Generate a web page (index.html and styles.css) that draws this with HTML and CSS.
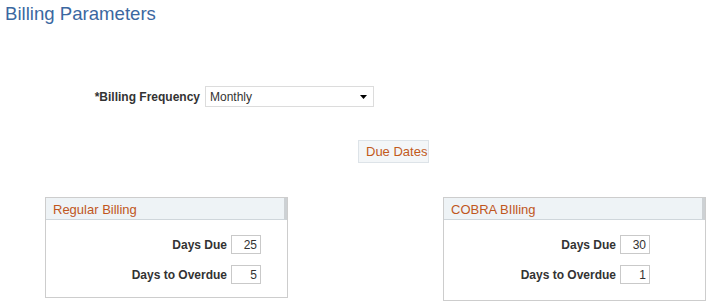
FILE: index.html
```html
<!DOCTYPE html>
<html>
<head>
<meta charset="utf-8">
<link rel="stylesheet" href="styles.css">
</head>
<body>
<h1 class="title">Billing Parameters</h1>
<div class="freq-row">
  <label class="lbl freq-lbl">*Billing Frequency</label>
  <div class="select">
    <span class="select-val">Monthly</span>
    <svg class="caret" width="7" height="4" viewBox="0 0 7 4"><path d="M0 0H7L3.5 4Z" fill="#000"/></svg>
  </div>
</div>
<div class="btn-row">
  <span class="btn">Due Dates</span>
</div>
<div class="boxes">
  <div class="box box-reg">
    <div class="box-head">Regular Billing</div>
    <div class="box-body">
      <div class="field"><span class="lbl">Days Due</span><span class="num">25</span></div>
      <div class="field"><span class="lbl">Days to Overdue</span><span class="num">5</span></div>
    </div>
  </div>
  <div class="box box-cobra">
    <div class="box-head">COBRA BIlling</div>
    <div class="box-body">
      <div class="field"><span class="lbl">Days Due</span><span class="num">30</span></div>
      <div class="field"><span class="lbl">Days to Overdue</span><span class="num">1</span></div>
    </div>
  </div>
</div>
</body>
</html>
```
FILE: styles.css
```css
* { box-sizing: border-box; }
body {
  margin: 0;
  background: #fff;
  font-family: "Liberation Sans", Arial, sans-serif;
  color: #333;
}
.title {
  margin: 0;
  padding: 3px 0 0 5px;
  font-size: 18.6px;
  font-weight: normal;
  color: #3b68a1;
  line-height: 22px;
}
.freq-row {
  display: flex;
  align-items: center;
  margin-top: 61px;
}
.lbl {
  font-size: 12px;
  font-weight: bold;
  color: #333;
}
.freq-lbl {
  width: 200px;
  text-align: right;
  margin-right: 5px;
}
.select {
  width: 169px;
  height: 21px;
  border: 1px solid #dcdcdc;
  display: flex;
  align-items: center;
  justify-content: space-between;
  padding: 0 6px 0 4px;
  font-size: 12px;
  color: #333;
}
.btn-row {
  display: flex;
  margin-top: 33px;
  padding-left: 358px;
}
.btn {
  width: 71px;
  height: 23px;
  border: 1px solid #dde3e8;
  background: #f3f6f8;
  color: #c25a1c;
  font-size: 13px;
  display: flex;
  align-items: center;
  padding-left: 7px;
  white-space: nowrap;
}
.boxes {
  display: flex;
  margin-top: 34px;
  padding-left: 45px;
  gap: 155px;
}
.box {
  border: 1px solid #cdcdcd;
  height: 101px;
}
.box-reg { width: 243px; }
.box-cobra { width: 263px; height: 104px; }
.box-head {
  height: 22px;
  background: #eef3f6;
  border-bottom: 1px solid #cfd6db;
  border-right: 3px solid #cdd1d4;
  color: #c0561d;
  font-size: 13px;
  padding: 4px 0 0 7px;
}
.box-body {
  display: flex;
  flex-direction: column;
  align-items: flex-end;
  gap: 11px;
  padding-top: 15px;
}
.box-reg .box-body { padding-right: 26px; }
.box-cobra .box-body { padding-right: 55px; }
.field {
  display: flex;
  align-items: center;
  gap: 4px;
}
.num {
  width: 30px;
  height: 19px;
  border: 1px solid #c9c9c9;
  font-size: 12px;
  text-align: right;
  padding: 2px 3px 0 0;
  color: #333;
}
```
